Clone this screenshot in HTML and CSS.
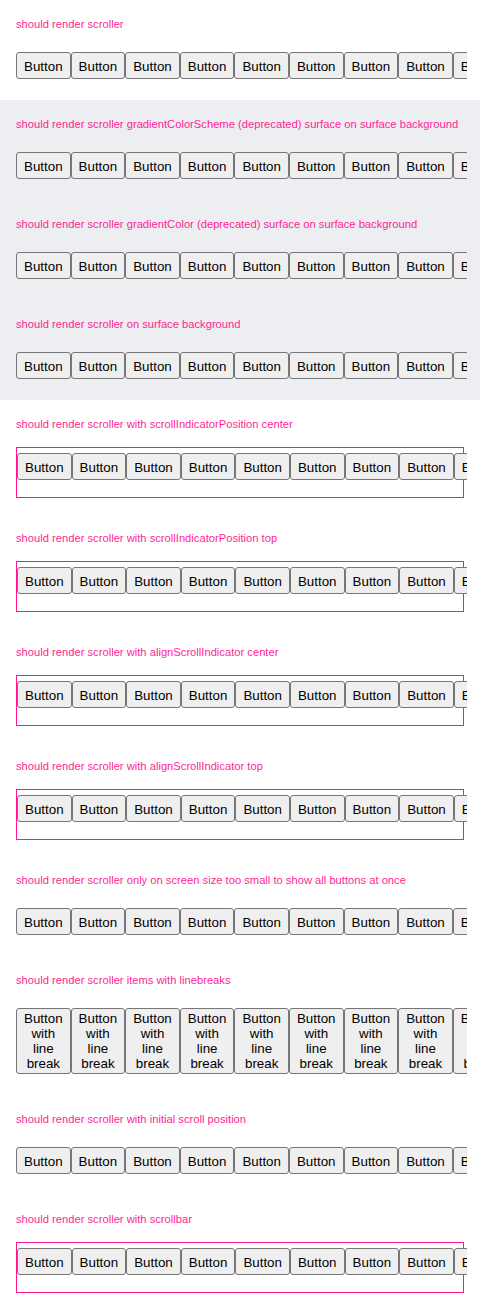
FILE: index.html
```html
<!DOCTYPE html>
<html>
<head>
<meta charset="utf-8">
<link rel="stylesheet" href="styles.css">
</head>
<body>
<div class="page">
  <section class="case">
    <div class="label">should render scroller</div>
    <div class="scroller"><div class="track">
      <button class="btn">Button</button><button class="btn">Button</button><button class="btn">Button</button><button class="btn">Button</button><button class="btn">Button</button><button class="btn">Button</button><button class="btn">Button</button><button class="btn">Button</button><button class="btn">Button</button><button class="btn">Button</button>
    </div></div>
  </section>
  <section class="case surface">
    <div class="label">should render scroller gradientColorScheme (deprecated) surface on surface background</div>
    <div class="scroller"><div class="track">
      <button class="btn">Button</button><button class="btn">Button</button><button class="btn">Button</button><button class="btn">Button</button><button class="btn">Button</button><button class="btn">Button</button><button class="btn">Button</button><button class="btn">Button</button><button class="btn">Button</button><button class="btn">Button</button>
    </div></div>
  </section>
  <section class="case surface">
    <div class="label">should render scroller gradientColor (deprecated) surface on surface background</div>
    <div class="scroller"><div class="track">
      <button class="btn">Button</button><button class="btn">Button</button><button class="btn">Button</button><button class="btn">Button</button><button class="btn">Button</button><button class="btn">Button</button><button class="btn">Button</button><button class="btn">Button</button><button class="btn">Button</button><button class="btn">Button</button>
    </div></div>
  </section>
  <section class="case surface">
    <div class="label">should render scroller on surface background</div>
    <div class="scroller"><div class="track">
      <button class="btn">Button</button><button class="btn">Button</button><button class="btn">Button</button><button class="btn">Button</button><button class="btn">Button</button><button class="btn">Button</button><button class="btn">Button</button><button class="btn">Button</button><button class="btn">Button</button><button class="btn">Button</button>
    </div></div>
  </section>
  <section class="case">
    <div class="label">should render scroller with scrollIndicatorPosition center</div>
    <div class="scroller framed"><div class="track">
      <button class="btn">Button</button><button class="btn">Button</button><button class="btn">Button</button><button class="btn">Button</button><button class="btn">Button</button><button class="btn">Button</button><button class="btn">Button</button><button class="btn">Button</button><button class="btn">Button</button><button class="btn">Button</button>
    </div></div>
  </section>
  <section class="case">
    <div class="label">should render scroller with scrollIndicatorPosition top</div>
    <div class="scroller framed"><div class="track">
      <button class="btn">Button</button><button class="btn">Button</button><button class="btn">Button</button><button class="btn">Button</button><button class="btn">Button</button><button class="btn">Button</button><button class="btn">Button</button><button class="btn">Button</button><button class="btn">Button</button><button class="btn">Button</button>
    </div></div>
  </section>
  <section class="case">
    <div class="label">should render scroller with alignScrollIndicator center</div>
    <div class="scroller framed"><div class="track">
      <button class="btn">Button</button><button class="btn">Button</button><button class="btn">Button</button><button class="btn">Button</button><button class="btn">Button</button><button class="btn">Button</button><button class="btn">Button</button><button class="btn">Button</button><button class="btn">Button</button><button class="btn">Button</button>
    </div></div>
  </section>
  <section class="case">
    <div class="label">should render scroller with alignScrollIndicator top</div>
    <div class="scroller framed"><div class="track">
      <button class="btn">Button</button><button class="btn">Button</button><button class="btn">Button</button><button class="btn">Button</button><button class="btn">Button</button><button class="btn">Button</button><button class="btn">Button</button><button class="btn">Button</button><button class="btn">Button</button><button class="btn">Button</button>
    </div></div>
  </section>
  <section class="case">
    <div class="label">should render scroller only on screen size too small to show all buttons at once</div>
    <div class="scroller"><div class="track">
      <button class="btn">Button</button><button class="btn">Button</button><button class="btn">Button</button><button class="btn">Button</button><button class="btn">Button</button><button class="btn">Button</button><button class="btn">Button</button><button class="btn">Button</button><button class="btn">Button</button><button class="btn">Button</button>
    </div></div>
  </section>
  <section class="case">
    <div class="label">should render scroller items with linebreaks</div>
    <div class="scroller"><div class="track">
      <button class="btn multi">Button with line break</button><button class="btn multi">Button with line break</button><button class="btn multi">Button with line break</button><button class="btn multi">Button with line break</button><button class="btn multi">Button with line break</button><button class="btn multi">Button with line break</button><button class="btn multi">Button with line break</button><button class="btn multi">Button with line break</button><button class="btn multi">Button with line break</button><button class="btn multi">Button with line break</button>
    </div></div>
  </section>
  <section class="case">
    <div class="label">should render scroller with initial scroll position</div>
    <div class="scroller"><div class="track">
      <button class="btn">Button</button><button class="btn">Button</button><button class="btn">Button</button><button class="btn">Button</button><button class="btn">Button</button><button class="btn">Button</button><button class="btn">Button</button><button class="btn">Button</button><button class="btn">Button</button><button class="btn">Button</button>
    </div></div>
  </section>
  <section class="case">
    <div class="label">should render scroller with scrollbar</div>
    <div class="scroller framed"><div class="track">
      <button class="btn">Button</button><button class="btn">Button</button><button class="btn">Button</button><button class="btn">Button</button><button class="btn">Button</button><button class="btn">Button</button><button class="btn">Button</button><button class="btn">Button</button><button class="btn">Button</button><button class="btn">Button</button>
    </div></div>
  </section>
</div>
</body>
</html>
```
FILE: styles.css
```css
* { box-sizing: border-box; }
html, body { margin: 0; padding: 0; background: #ffffff; }
.page { width: 480px; }
.case {
  padding: 16px 16px 16px 16px;
  display: flex;
  flex-direction: column;
}
.surface { background: #edeef2; }
.label {
  font-family: "Liberation Sans", Arial, sans-serif;
  font-size: 11.2px;
  line-height: 14px;
  height: 15px;
  padding-top: 1px;
  color: #ff1f96;
  white-space: nowrap;
  margin-bottom: 16px;
}
.scroller {
  padding: 5px 0;
}
.framed {
  border: 1px solid #ff1493;
  padding: 5px 0 17px 0;
}
.track {
  display: flex;
  overflow: hidden;
  margin-right: -3px;
}
.framed .track { margin-right: -4px; }
.btn {
  flex: none;
  width: 54.6px;
  height: 27px;
  margin: 0;
  padding: 1px 6px 0 6px;
  border: 1px solid #767676;
  border-radius: 3px;
  background: #efefef;
  color: #000;
  font-family: "Liberation Sans", Arial, sans-serif;
  font-size: 13.333px;
  line-height: 15px;
  text-align: center;
}
.multi {
  height: auto;
  padding: 2px 4px;
  white-space: normal;
}
```
